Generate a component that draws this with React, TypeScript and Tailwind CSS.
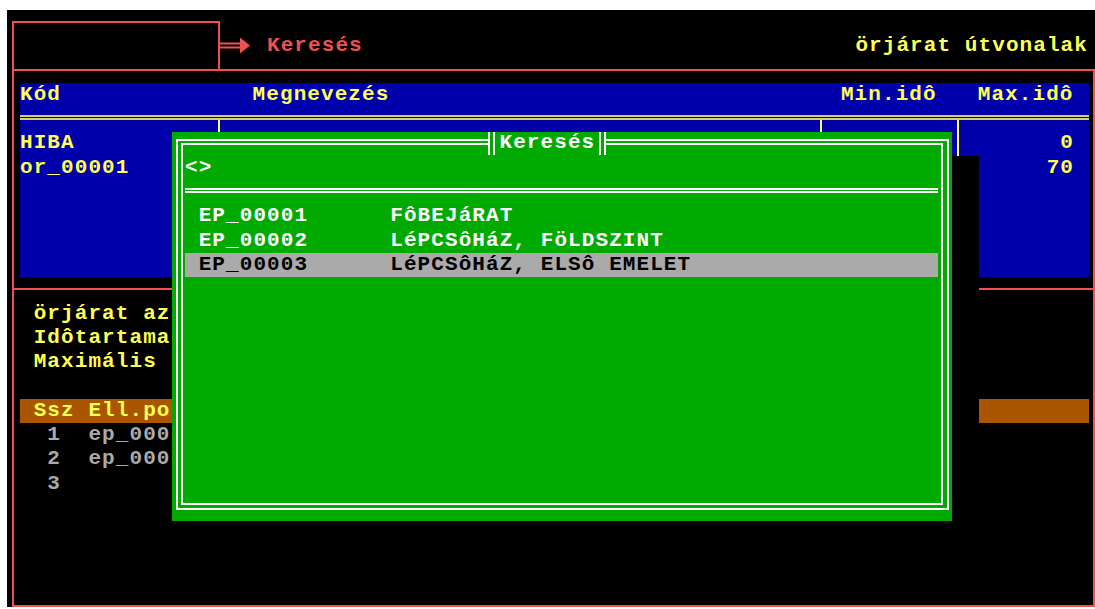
import React from "react";

// Text-mode style screen: 80 columns of 13.68px, rows of 24.3px.
const HEADER =
  "Kód" + " ".repeat(14) + "Megnevezés" + " ".repeat(33) + "Min.idô" + "   " + "Max.idô";

const POINTS = [
  { code: "EP_00001", name: "FôBEJáRAT" },
  { code: "EP_00002", name: "LéPCSôHáZ, FöLDSZINT" },
  { code: "EP_00003", name: "LéPCSôHáZ, ELSô EMELET" },
];

function DoubleBar() {
  return <div className="w-[7px] h-full border-x-2 border-white" />;
}

export default function App() {
  return (
    <div className="w-[1095px] h-[609px] bg-white pl-[7px] pt-[10px] overflow-hidden">
      <div className="relative w-[1088px] h-[597px] bg-black overflow-hidden font-['Liberation_Mono',monospace] font-bold text-[21px] leading-[24.3px] tracking-[1.08px] whitespace-pre">
        {/* top strip: input box, arrow and titles */}
        <div className="flex h-[59px] items-start">
          <div className="ml-[5px] mt-[11px] w-[208px] h-[48px] border-2 border-b-0 border-[#f05050]" />
          <div className="mt-[24.3px] h-[24.3px] flex items-center">
            <svg width="31" height="24" viewBox="0 0 31 24">
              <rect x="0" y="8.5" width="22" height="2" fill="#f05050" />
              <rect x="0" y="12.5" width="22" height="2" fill="#f05050" />
              <polygon points="20,3.5 30,11.5 20,19.5" fill="#f05050" />
            </svg>
          </div>
          <span className="mt-[24.3px] ml-[16px] text-[#f05050]">Keresés</span>
          <span className="mt-[24.3px] ml-auto mr-[7px] text-[#ffff55]">örjárat útvonalak</span>
        </div>

        {/* main frame */}
        <div className="ml-[5px] w-[1083px] h-[538px] border-2 border-[#f05050] flex flex-col">
          {/* route table */}
          <div className="ml-[6px] mt-[12px] w-[1069px] h-[194px] bg-[#0000aa] text-[#ffff55] flex flex-col">
            <div className="h-[24.3px]">{HEADER}</div>
            <div className="mt-[8px] h-[5px] border-y-2 border-[#d8d070]" />
            <div className="flex flex-1">
              <div className="w-[198px] pt-[11.2px]">
                <div>HIBA</div>
                <div>or_00001</div>
              </div>
              <div className="w-[2px] bg-[#ffff55]" />
              <div className="w-[600px]" />
              <div className="w-[2px] bg-[#ffff55]" />
              <div className="w-[135px]" />
              <div className="w-[2px] bg-[#ffff55]" />
              <div className="flex-1 pt-[11.2px] pr-[15px] text-right">
                <div>0</div>
                <div>70</div>
              </div>
            </div>
          </div>

          {/* route details */}
          <div className="mt-[11px] flex-1 border-t-2 border-[#f05050] pl-[6px] pt-[11.6px]">
            <div className="text-[#ffff55]">{" örjárat az"}</div>
            <div className="text-[#ffff55]">{" Idôtartama"}</div>
            <div className="text-[#ffff55]">{" Maximális"}</div>
            <div className="h-[24.3px]" />
            <div className="w-[1069px] h-[24.3px] bg-[#aa5500] text-[#ffff55]">{" Ssz Ell.po"}</div>
            <div className="text-[#aaaaaa]">{"  1  ep_000"}</div>
            <div className="text-[#aaaaaa]">{"  2  ep_000"}</div>
            <div className="text-[#aaaaaa]">{"  3"}</div>
          </div>
        </div>

        {/* search dialog shadow */}
        <div className="absolute left-[192px] top-[146px] w-[780px] h-[389px] bg-black" />

        {/* search dialog */}
        <div className="absolute left-[165px] top-[122px] w-[780px] h-[389px] bg-[#00aa00] pl-[4px] pt-[7px] pr-[3px] pb-[11px] text-white">
          <div className="h-full border-2 border-white pl-[3px] pt-[2px] pr-[4px] pb-[3px]">
            <div className="h-full border-2 border-white pl-[2px]">
              <div className="mt-[10.8px] h-[24.3px]">{"<>"}</div>
              <div className="mt-[7.9px] w-[753px] h-[5px] border-y-2 border-white" />
              <div className="mt-[11.4px] w-[753px]">
                {POINTS.map((p, i) => (
                  <div
                    key={p.code}
                    className={
                      i === 2
                        ? "h-[24.3px] bg-[#aaaaaa] text-black"
                        : "h-[24.3px]"
                    }
                  >
                    {" " + p.code + "      " + p.name}
                  </div>
                ))}
              </div>
            </div>
          </div>
          <div className="absolute left-[316px] top-0 h-[23px] flex items-center bg-[#00aa00]">
            <DoubleBar />
            <span className="ml-[4.5px]">Keresés</span>
            <div className="ml-[3.7px] h-full flex">
              <DoubleBar />
            </div>
          </div>
        </div>
      </div>
    </div>
  );
}
